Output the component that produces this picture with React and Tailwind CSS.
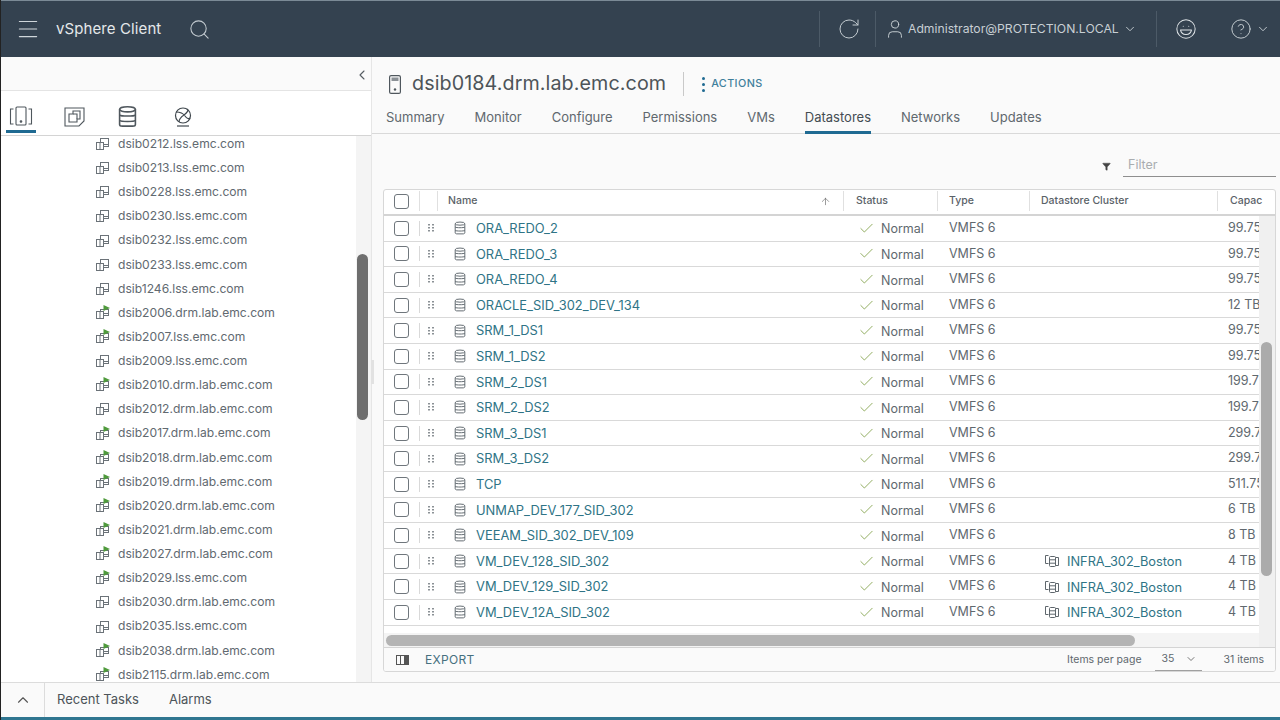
import React from 'react';
import { ChevronDown, ChevronLeft, ChevronUp, Menu, Search, RotateCw, User, Laugh, CircleHelp, ArrowUp, Check, Filter } from 'lucide-react';

const font = { fontFamily: '"Inter", "Liberation Sans", sans-serif' };

const hosts = [
  ['dsib0212.lss.emc.com', false],
  ['dsib0213.lss.emc.com', false],
  ['dsib0228.lss.emc.com', false],
  ['dsib0230.lss.emc.com', false],
  ['dsib0232.lss.emc.com', false],
  ['dsib0233.lss.emc.com', false],
  ['dsib1246.lss.emc.com', false],
  ['dsib2006.drm.lab.emc.com', true],
  ['dsib2007.lss.emc.com', true],
  ['dsib2009.lss.emc.com', false],
  ['dsib2010.drm.lab.emc.com', true],
  ['dsib2012.drm.lab.emc.com', false],
  ['dsib2017.drm.lab.emc.com', true],
  ['dsib2018.drm.lab.emc.com', true],
  ['dsib2019.drm.lab.emc.com', true],
  ['dsib2020.drm.lab.emc.com', true],
  ['dsib2021.drm.lab.emc.com', true],
  ['dsib2027.drm.lab.emc.com', true],
  ['dsib2029.lss.emc.com', true],
  ['dsib2030.drm.lab.emc.com', false],
  ['dsib2035.lss.emc.com', false],
  ['dsib2038.drm.lab.emc.com', true],
  ['dsib2115.drm.lab.emc.com', true],
];

const rows = [
  ['ORA_REDO_2', '', '99.75'],
  ['ORA_REDO_3', '', '99.75'],
  ['ORA_REDO_4', '', '99.75'],
  ['ORACLE_SID_302_DEV_134', '', '12 TB'],
  ['SRM_1_DS1', '', '99.75'],
  ['SRM_1_DS2', '', '99.75'],
  ['SRM_2_DS1', '', '199.75'],
  ['SRM_2_DS2', '', '199.75'],
  ['SRM_3_DS1', '', '299.7'],
  ['SRM_3_DS2', '', '299.7'],
  ['TCP', '', '511.75'],
  ['UNMAP_DEV_177_SID_302', '', '6 TB'],
  ['VEEAM_SID_302_DEV_109', '', '8 TB'],
  ['VM_DEV_128_SID_302', 'INFRA_302_Boston', '4 TB'],
  ['VM_DEV_129_SID_302', 'INFRA_302_Boston', '4 TB'],
  ['VM_DEV_12A_SID_302', 'INFRA_302_Boston', '4 TB'],
];

const tabs = ['Summary', 'Monitor', 'Configure', 'Permissions', 'VMs', 'Datastores', 'Networks', 'Updates'];

const HostIcon = ({ flag }) => (
  <svg width="16" height="16" viewBox="0 0 16 16" fill="none" stroke="#6b7278" strokeWidth="1" className="shrink-0">
    <rect x="5.5" y={flag ? 4.5 : 2.5} width="8" height={flag ? 6 : 8} />
    <rect x="1.5" y="6.5" width="7" height="7" fill="white" />
    <path d="M8.5 8.5h5M5 6.5v7" />
    {flag && <path d="M8.5 0 15 3 8.5 6z" fill="#4f9a3c" stroke="none" />}
  </svg>
);

const DatastoreIcon = ({ size = 16, color = '#5f676d' }) => (
  <svg width={size} height={size} viewBox="0 0 16 16" fill="none" stroke={color} strokeWidth="1.1" className="shrink-0">
    <ellipse cx="8" cy="3" rx="5.5" ry="1.8" />
    <path d="M2.5 3v10.5c0 .8 1 1.2 2 1.2h7c1 0 2-.4 2-1.2V3" />
    <path d="M2.5 7c1 .9 10 .9 11 0M2.5 10.8c1 .9 10 .9 11 0" />
  </svg>
);

const ClusterIcon = () => (
  <svg width="16" height="14" viewBox="0 0 16 14" fill="none" stroke="#5f676d" strokeWidth="1" className="shrink-0">
    <path d="M4.5 1.5h-3v8h3M11.5 11.5h3v-8h-3" />
    <rect x="5.5" y="2.5" width="6" height="10" rx="1" />
    <path d="M5.5 5.8h6M5.5 9.2h6" />
  </svg>
);

const Checkbox = () => <div className="w-[15px] h-[15px] rounded-[3px] border border-[#6f767c] bg-white shrink-0" />;

const DragHandle = () => (
  <svg width="6" height="8" viewBox="0 0 6 8" fill="#8b9196" className="shrink-0">
    {[0, 3, 6].map((y) => (
      <React.Fragment key={y}>
        <rect x="0" y={y} width="2" height="1.5" />
        <rect x="4" y={y} width="2" height="1.5" />
      </React.Fragment>
    ))}
  </svg>
);

const Divider = () => <div className="h-[36px] w-px bg-[#4c5a67] shrink-0" />;

const Header = () => (
  <header className="h-[57px] shrink-0 bg-[#344250] border-t border-[#7b8a96] flex items-center text-[#e4e8ea]">
    <Menu size={26} strokeWidth={1} className="ml-[14px] text-[#cfd6da]" />
    <span className="ml-[15px] text-[15px] tracking-[0.1px]">vSphere Client</span>
    <Search size={23} strokeWidth={1.1} className="ml-[27px] text-[#c3cbd0]" />
    <div className="ml-auto"><Divider /></div>
    <RotateCw size={24} strokeWidth={1} className="ml-[17px] mr-[14px] text-[#c3cbd0]" />
    <Divider />
    <User size={22} strokeWidth={1} className="ml-[8px] text-[#cfd6da]" />
    <span className="ml-[2px] text-[12.2px] text-[#c8cfd4] w-[212px] whitespace-nowrap">Administrator@PROTECTION.LOCAL</span>
    <ChevronDown size={14} strokeWidth={1.5} className="ml-[3px] text-[#cfd6da]" />
    <div className="ml-[19px]"><Divider /></div>
    <Laugh size={22} strokeWidth={1.1} className="ml-[18px] text-[#dfe4e7]" />
    <CircleHelp size={22} strokeWidth={1} className="ml-[33px] text-[#cfd6da]" />
    <ChevronDown size={14} strokeWidth={1.5} className="ml-[4px] mr-[10px] text-[#cfd6da]" />
  </header>
);

const Sidebar = () => (
  <aside className="w-[370px] shrink-0 flex flex-col bg-[#fafafa] min-h-0">
    <div className="h-[34px] shrink-0 flex items-center justify-end pr-[1px] pt-[2px] border-b border-[#e4e4e4]">
      <ChevronLeft size={16} strokeWidth={1.6} className="text-[#555c62]" />
    </div>
    <div className="h-[45px] shrink-0 bg-white border-b border-[#d4d4d4] flex items-center pt-[7px] shadow-[0_1px_1px_rgba(0,0,0,0.06)]">
      <div className="w-[30px] ml-[5px] h-[38px] -mt-[7px] pt-[7px] flex items-center justify-center border-b-[3px] border-[#1f6a92] relative top-[1px]">
        <svg width="24" height="20" viewBox="0 0 24 20" fill="none" stroke="#4f575d" strokeWidth="1.1">
          <path d="M4.5 3H1.5v15h3M19.5 3h3v15h-3" />
          <rect x="7" y="1" width="10" height="18" rx="1" />
          <circle cx="12" cy="15.5" r="0.8" fill="#4f575d" />
        </svg>
      </div>
      <svg width="22" height="20" viewBox="0 0 22 20" fill="none" stroke="#4f575d" strokeWidth="1.1" className="ml-[28px]">
        <path d="M1 1h19v13l-5 5H1z" />
        <path d="M5 7h4V4h7v8h-3v3H5z" />
        <path d="M9 7h4v5" />
      </svg>
      <div className="ml-[30px]"><DatastoreIcon size={23} color="#4f575d" /></div>
      <svg width="20" height="20" viewBox="0 0 20 20" fill="none" stroke="#3f474d" strokeWidth="1.2" className="ml-[34px]">
        <circle cx="10" cy="8.5" r="7.5" />
        <path d="M3 5c4 0 7 1 9 4s4 3 5 2M6 15c0-3 2-5 5-7s5-5 3-6" />
        <path d="M4 19h12" />
      </svg>
    </div>
    <div className="flex-1 min-h-0 flex relative bg-white">
      <div className="flex-1 overflow-hidden bg-white">
        <div className="-mt-[4px] pl-[94px]">
          {hosts.map(([name, flag]) => (
            <div key={name} className="h-[24.13px] flex items-center text-[12.1px] text-[#616970] whitespace-nowrap">
              <HostIcon flag={flag} />
              <span className="ml-[7px]">{name}</span>
            </div>
          ))}
        </div>
      </div>
      <div className="w-[15px] bg-[#f4f4f4] shrink-0 relative">
        <div className="absolute left-[1px] top-[118px] w-[11px] h-[166px] bg-[#6e6e6e] rounded-[6px]" />
      </div>
    </div>
  </aside>
);

const Toolbar = () => (
  <div className="h-[132px] shrink-0 flex flex-col">
    <div className="h-[50px] flex items-center pl-[17px] pt-[4px]">
      <svg width="12" height="19" viewBox="0 0 12 19" fill="none" stroke="#4f575d" strokeWidth="1.2">
        <rect x="0.6" y="0.6" width="10.8" height="17.8" rx="1.5" />
        <rect x="2.5" y="2.5" width="7" height="3.5" fill="#8a9095" stroke="none" />
        <circle cx="6" cy="14.5" r="1.2" fill="#4f575d" stroke="none" />
      </svg>
      <span className="ml-[11px] text-[19.7px] text-[#4d5459] tracking-[0.1px]">dsib0184.drm.lab.emc.com</span>
      <div className="ml-[17px] h-[24px] w-px bg-[#c9c9c9]" />
      <div className="ml-[18px] flex flex-col gap-[3px]">
        <div className="w-[3px] h-[3px] rounded-full bg-[#1f6a92]" />
        <div className="w-[3px] h-[3px] rounded-full bg-[#1f6a92]" />
        <div className="w-[3px] h-[3px] rounded-full bg-[#1f6a92]" />
      </div>
      <span className="ml-[6px] text-[10.8px] font-medium text-[#3f7f9c] tracking-[0.4px]">ACTIONS</span>
    </div>
    <div className="h-[26px] mt-[1px] flex gap-[30px] pl-[14px] border-b border-[#d9d9d9] text-[13px] text-[#60686e]">
      {tabs.map((t) => (
        <div key={t} className={t === 'Datastores' ? 'h-[26px] text-[#444c52] border-b-[3px] border-[#1f6a92]' : 'h-[26px]'}>{t}</div>
      ))}
    </div>
    <div className="flex-1 flex items-end justify-end pb-[12px] pr-[4px]">
      <Filter size={9} fill="#444" strokeWidth={1} className="text-[#444] mb-[6px]" />
      <div className="ml-[12px] w-[153px] h-[22px] border-b border-[#8e8e8e] text-[12.5px] text-[#a9adb0] leading-[20px] pl-[5px]">Filter</div>
    </div>
  </div>
);

const colClass = 'shrink-0 flex items-center';
const headSep = 'h-[20px] w-px bg-[#e0e0e0] shrink-0';

const Grid = () => (
  <div className="h-[483px] mr-[4px] ml-[11px] border border-[#d7d7d7] rounded-[3px] bg-white flex flex-col overflow-hidden">
    <div className="h-[26px] shrink-0 flex items-center border-b-2 border-[#d4d4d4] text-[10.5px] font-medium text-[#5a6268] pb-[2px]">
      <div className={`${colClass} w-[35px] pl-[10px] h-full`}><Checkbox /></div>
      <div className={headSep} />
      <div className="w-[17px] shrink-0" />
      <div className={headSep} />
      <div className={`${colClass} w-[405px] pl-[10px] justify-between pr-[12px]`}>
        <span>Name</span>
        <ArrowUp size={11} strokeWidth={1.4} className="text-[#666]" />
      </div>
      <div className={headSep} />
      <div className="w-[93px] pl-[12px] shrink-0">Status</div>
      <div className={headSep} />
      <div className="w-[91px] pl-[11px] shrink-0">Type</div>
      <div className={headSep} />
      <div className="w-[187px] pl-[11px] shrink-0">Datastore Cluster</div>
      <div className={headSep} />
      <div className="pl-[12px] whitespace-nowrap">Capac</div>
    </div>
    <div className="flex-1 min-h-0 flex">
      <div className="flex-1 min-w-0 overflow-hidden">
        <div className="h-[416px] overflow-hidden">
          {rows.map(([name, cluster, cap]) => (
            <div key={name} className="h-[25.6px] flex items-center border-b border-[#d9d9d9] text-[12.5px] text-[#60686e] whitespace-nowrap">
              <div className={`${colClass} w-[35px] pl-[10px]`}><Checkbox /></div>
              <div className="h-[15px] w-px bg-[#d9d9d9] shrink-0" />
              <div className={`${colClass} w-[17px] pl-[8px]`}><DragHandle /></div>
              <div className={`${colClass} w-[407px] pl-[16px]`}>
                <DatastoreIcon size={14} />
                <span className="ml-[9px] pt-[1px] text-[12.9px] text-[#2f7486]">{name}</span>
              </div>
              <div className={`${colClass} w-[94px] pl-[14px]`}>
                <Check size={17} strokeWidth={1.2} className="text-[#7f9f47]" />
                <span className="ml-[6px] pt-[3px]">Normal</span>
              </div>
              <div className={`${colClass} w-[92px] pl-[11px]`}>VMFS 6</div>
              <div className={`${colClass} w-[188px] pl-[14px]`}>
                {cluster && <ClusterIcon />}
                {cluster && <span className="ml-[7px] pt-[1px] text-[12.8px] text-[#2f7486]">{cluster}</span>}
              </div>
              <div className="pl-[10px]">{cap}</div>
            </div>
          ))}
          <div className="pl-[71px] h-[3px] overflow-hidden pt-[3px]">
            <div className="w-[12px] h-[3px] bg-[#999]" />
          </div>
        </div>
        <div className="h-[14px] mt-[1px] bg-[#f4f4f4] flex items-center pl-[2px]">
          <div className="w-[749px] h-[11px] rounded-full bg-[#b4b4b4]" />
        </div>
      </div>
      <div className="w-[16px] shrink-0 bg-[#f0f0f0] relative">
        <div className="absolute left-[2px] top-[126px] w-[11px] h-[234px] bg-[#ababab] rounded-[6px]" />
      </div>
    </div>
    <div className="h-[24px] shrink-0 border-t border-[#d4d4d4] bg-[#fafafa] flex items-center text-[10.5px] text-[#60686e]">
      <svg width="13" height="10" viewBox="0 0 13 10" className="ml-[12px]" fill="none" stroke="#555">
        <rect x="0.5" y="0.5" width="12" height="9" />
        <path d="M4.5 0v10M8.5 0v10" />
        <rect x="9" y="0" width="4" height="10" fill="#555" />
      </svg>
      <span className="ml-[16px] text-[12px] text-[#46707f] tracking-[0.3px]">EXPORT</span>
      <span className="ml-auto">Items per page</span>
      <div className="ml-[13px] w-[47px] h-[24px] border-b-2 border-[#a0a0a0] flex items-center pl-[7px] justify-between pr-[5px]">
        <span>35</span>
        <ChevronDown size={12} strokeWidth={1.6} className="text-[#555]" />
      </div>
      <span className="ml-[22px] mr-[11px]">31 items</span>
    </div>
  </div>
);

export default function App() {
  return (
    <div className="w-[1280px] h-[720px] overflow-hidden flex flex-col bg-[#fafafa] border-l border-[#222]" style={font}>
      <Header />
      <div className="flex-1 min-h-0 flex">
        <Sidebar />
        <main className="flex-1 min-w-0 flex flex-col border-l border-[#e6e6e6] relative">
          <div className="absolute -left-[1px] top-[303px] w-[3px] h-[24px] bg-[#e2e2e2]" />
          <Toolbar />
          <Grid />
        </main>
      </div>
      <div className="h-[35px] shrink-0 border-t border-[#dcdcdc] flex items-center bg-[#fafafa] text-[13px] text-[#4d5459]">
        <div className="w-[44px] h-full flex items-center justify-center border-r border-[#dcdcdc]">
          <ChevronUp size={18} strokeWidth={1.5} className="text-[#555]" />
        </div>
        <span className="ml-[12px]">Recent Tasks</span>
        <span className="ml-[30px]">Alarms</span>
      </div>
      <div className="h-[3px] shrink-0 bg-[#2f7690]" />
    </div>
  );
}
